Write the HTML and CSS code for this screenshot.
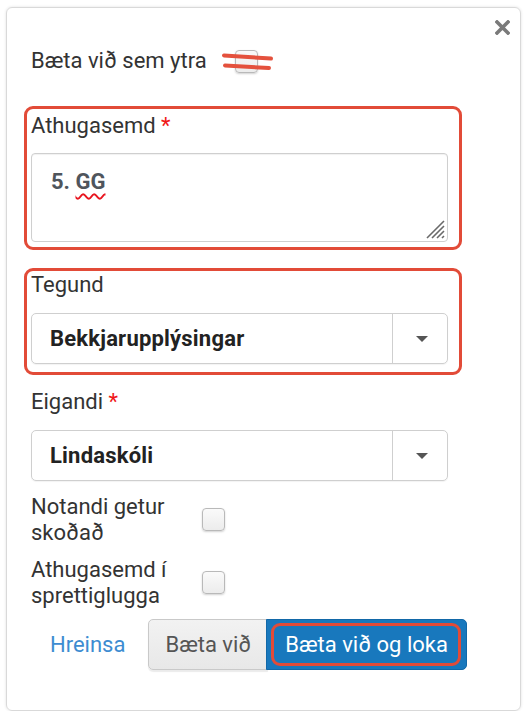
FILE: index.html
```html
<!DOCTYPE html>
<html lang="is">
<head>
<meta charset="utf-8">
<title>Athugasemd</title>
<link rel="stylesheet" href="styles.css">
</head>
<body>
<div class="panel">
  <button class="close" aria-label="Loka">
    <svg width="15" height="15" viewBox="0 0 15 15"><path d="M2 2 L13 13 M13 2 L2 13" stroke="#7a7a7a" stroke-width="3.6" stroke-linecap="square" fill="none"/></svg>
  </button>

  <div class="row-top">
    <span class="label-text">Bæta við sem ytra</span>
    <span class="cb-wrap">
      <span class="cb"></span>
      <svg class="strike" width="54" height="20" viewBox="0 0 54 20"><path d="M3 3.5 L50 6.5 M4 13.5 L48 16" stroke="#e4513d" stroke-width="4" stroke-linecap="round" fill="none"/></svg>
    </span>
  </div>

  <div class="group hl hl-1">
    <div class="label">Athugasemd <span class="req">*</span></div>
    <div class="textarea">5. <span class="typo">GG</span>
      <svg class="grip" width="22" height="22" viewBox="0 0 22 22"><path d="M21 4 L4 21 M21 9 L9 21 M21 14 L14 21 M21 19 L19 21" stroke="#6a6a6a" stroke-width="1.6" fill="none"/></svg>
    </div>
  </div>

  <div class="group hl hl-2 g2">
    <div class="label">Tegund</div>
    <div class="select"><span class="sel-val">Bekkjarupplýsingar</span><span class="sel-btn"><span class="caret"></span></span></div>
  </div>

  <div class="group g3">
    <div class="label">Eigandi <span class="req">*</span></div>
    <div class="select"><span class="sel-val">Lindaskóli</span><span class="sel-btn"><span class="caret"></span></span></div>
  </div>

  <div class="check-row r1">
    <span class="check-label">Notandi getur skoðað</span>
    <span class="cb"></span>
  </div>
  <div class="check-row r2">
    <span class="check-label">Athugasemd í sprettiglugga</span>
    <span class="cb"></span>
  </div>

  <div class="actions">
    <a class="link-btn" href="#">Hreinsa</a>
    <div class="btn-group">
      <button class="btn btn-default">Bæta við</button>
      <button class="btn btn-primary hl-btn">Bæta við og loka</button>
    </div>
  </div>
</div>
</body>
</html>
```

FILE: styles.css
```css
* { box-sizing: border-box; }
html, body { margin: 0; padding: 0; background: #fff; }
body {
  font-family: "Roboto", "Liberation Sans", sans-serif;
  font-size: 22px;
  color: #333;
}
.panel {
  position: relative;
  margin: 7px 0 0 6px;
  width: 515px;
  height: 704px;
  border: 1px solid #d9d9d9;
  border-radius: 6px;
  box-shadow: 0 0 3px rgba(0,0,0,0.12);
  padding: 38px 0 0 24px;
}
.close {
  position: absolute;
  top: 12px;
  right: 10px;
  padding: 0;
  border: 0;
  background: none;
  line-height: 0;
}
.row-top {
  display: flex;
  align-items: center;
  height: 30px;
  line-height: 30px;
}
.cb-wrap {
  position: relative;
  margin-left: 28px;
  display: inline-flex;
}
.cb {
  display: inline-block;
  width: 23px;
  height: 23px;
  border: 1px solid #b9b9b9;
  border-radius: 4px;
  background: linear-gradient(#fafafa, #ececec);
  box-shadow: 0 1px 2px rgba(0,0,0,0.18);
  flex: none;
}
.strike {
  position: absolute;
  left: -14px;
  top: 2px;
}
.group {
  position: relative;
  width: 417px;
}
.hl-1 { margin-top: 35px; }
.g2 { margin-top: 28px; }
.g3 { margin-top: 23px; }
.hl::before {
  content: "";
  position: absolute;
  border: 3px solid #e24b38;
  border-radius: 9px;
  pointer-events: none;
}
.hl-1::before { top: -5px; bottom: -8px; left: -7px; right: -14px; }
.hl-2::before { top: -2px; bottom: -11px; left: -7px; right: -14px; }
.label {
  line-height: 30px;
  height: 30px;
  margin-bottom: 13px;
}
.hl-1 .label { margin-bottom: 12px; }
.req { color: #f01818; }
.textarea {
  position: relative;
  height: 89px;
  border: 1px solid #cfcfcf;
  border-radius: 4px;
  box-shadow: inset 0 1px 1px rgba(0,0,0,0.06);
  padding: 13px 19px;
  line-height: 30px;
  font-weight: 700;
  color: #4f555c;
}
.typo {
  text-decoration: underline wavy #e8141e;
  text-decoration-thickness: 1.5px;
  text-underline-offset: 4px;
}
.grip {
  position: absolute;
  right: 2px;
  bottom: 2px;
}
.select {
  display: flex;
  height: 51px;
  border: 1px solid #cfcfcf;
  border-radius: 5px;
  box-shadow: 0 1px 1px rgba(0,0,0,0.05);
}
.sel-val {
  flex: 1;
  display: flex;
  align-items: center;
  padding-left: 18px;
  font-weight: 700;
  color: #222;
  letter-spacing: 0.2px;
}
.sel-btn {
  width: 55px;
  border-left: 1px solid #cfcfcf;
  display: flex;
  align-items: center;
  justify-content: center;
  padding-left: 3px;
}
.caret {
  width: 0;
  height: 0;
  border-left: 6px solid transparent;
  border-right: 6px solid transparent;
  border-top: 6px solid #555;
}
.check-row {
  display: flex;
  align-items: center;
}
.r1 { margin-top: 13px; }
.r2 { margin-top: 12px; }
.check-label {
  width: 160px;
  line-height: 25.5px;
  margin-right: 11px;
}
.actions {
  display: flex;
  align-items: center;
  margin-top: 11px;
  gap: 4px;
}
.link-btn {
  padding: 0 19px;
  color: #3d8cd1;
  text-decoration: none;
  line-height: 51px;
}
.btn-group { display: flex; }
.btn {
  font-family: inherit;
  font-size: 22px;
  height: 51px;
  padding: 0 16px;
  border: 1px solid #c9c9c9;
  margin: 0;
}
.btn-default {
  background: linear-gradient(#f2f2f2, #e8e8e8);
  color: #555;
  border-radius: 5px 0 0 5px;
  box-shadow: 0 2px 1px rgba(0,0,0,0.08);
}
.btn-primary {
  position: relative;
  margin-left: -2px;
  background: #1878bd;
  border-color: #1268a8;
  color: #fff;
  border-radius: 0 5px 5px 0;
  padding: 0 18px;
}
.hl-btn::after {
  content: "";
  position: absolute;
  top: 3px;
  bottom: 3px;
  left: 4px;
  right: 5px;
  border: 3px solid #e24b38;
  border-radius: 9px;
}
```
